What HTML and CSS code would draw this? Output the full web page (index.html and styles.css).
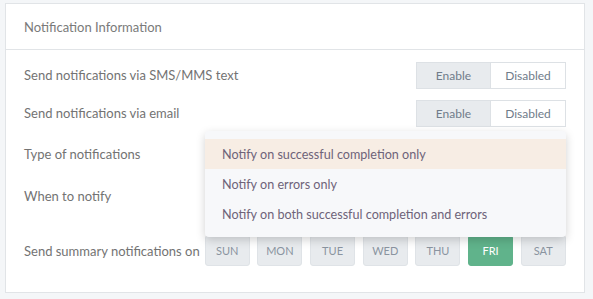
FILE: index.html
```html
<!doctype html>
<html lang="en">
<head>
  <meta charset="UTF-8">
  <title>Notification Information</title>
  <link rel="stylesheet" href="styles.css">
</head>
<body>
  <section class="card">
    <header class="card-header">Notification Information</header>

    <div class="card-body">
      <div class="row row-sms">
        <span class="label">Send notifications via SMS/MMS text</span>
        <div class="toggle">
          <button class="toggle-btn active">Enable</button>
          <button class="toggle-btn">Disabled</button>
        </div>
      </div>

      <div class="row row-email">
        <span class="label">Send notifications via email</span>
        <div class="toggle">
          <button class="toggle-btn active">Enable</button>
          <button class="toggle-btn">Disabled</button>
        </div>
      </div>

      <div class="row row-type">
        <span class="label">Type of notifications</span>
        <ul class="menu">
          <li class="menu-item selected">Notify on successful completion only</li>
          <li class="menu-item">Notify on errors only</li>
          <li class="menu-item">Notify on both successful completion and errors</li>
        </ul>
      </div>

      <div class="row row-when">
        <span class="label">When to notify</span>
      </div>

      <div class="row row-days">
        <span class="label">Send summary notifications on</span>
        <div class="days">
          <button class="day">Sun</button>
          <button class="day">Mon</button>
          <button class="day">Tue</button>
          <button class="day">Wed</button>
          <button class="day">Thu</button>
          <button class="day on">Fri</button>
          <button class="day">Sat</button>
        </div>
      </div>
    </div>
  </section>
</body>
</html>
```

FILE: styles.css
```css
* {
  box-sizing: border-box;
  margin: 0;
  padding: 0;
}

body {
  background-color: #f4f6f8;
  font-family: Lato, "Noto Sans", sans-serif;
  font-size: 13px;
  color: #737373;
  padding: 3px 8px 6px 5px;
}

.card {
  position: relative;
  background-color: white;
  border: 1px solid #e1e4e7;
  height: 290px;
}

.card-header {
  height: 46px;
  padding: 0 18px;
  display: flex;
  align-items: center;
  color: #7a7a7a;
  border-bottom: 1px solid #e1e4e7;
}

.card-body {
  padding: 11px 18px 0 18px;
}

.row {
  display: flex;
  align-items: center;
  height: 28px;
}

.row-sms {
  margin-bottom: 10px;
}

.row-email {
  margin-bottom: 13px;
}

.row-type {
  margin-bottom: 14px;
}

.row-when {
  margin-bottom: 25px;
}

.row-days {
  height: 31px;
}

.label {
  flex: 1;
}

.row-days .label {
  flex: none;
  margin-right: 5px;
}

/* enable / disabled switch */
.toggle {
  display: flex;
  border: 1px solid #dde1e5;
  height: 27px;
}

.toggle-btn {
  font-family: inherit;
  font-size: 12px;
  color: #6f7c8a;
  background-color: white;
  border: none;
  width: 74px;
}

.toggle-btn.active {
  background-color: #e8ebee;
  border-right: 1px solid #dde1e5;
}

/* open select list */
.menu {
  position: absolute;
  left: 199px;
  top: 127px;
  width: 361px;
  list-style: none;
  background-color: #f7f8fa;
  border-radius: 4px;
  padding: 8px 0;
  box-shadow: 0 3px 10px rgba(0, 0, 0, 0.18);
  z-index: 2;
}

.menu-item {
  height: 30px;
  display: flex;
  align-items: center;
  padding: 0 17px;
  font-size: 12.6px;
  color: #6e6379;
}

.menu-item.selected {
  background-color: #f7ede4;
}

/* weekday picker */
.days {
  display: flex;
  gap: 7.7px;
}

.day {
  font-family: inherit;
  font-size: 11px;
  text-transform: uppercase;
  color: #8a94a0;
  background-color: #e8ebee;
  border: 1px solid #dfe3e7;
  border-radius: 3px;
  width: 45px;
  height: 31px;
}

.day.on {
  background-color: #60b38b;
  border-color: #60b38b;
  color: white;
}
```
